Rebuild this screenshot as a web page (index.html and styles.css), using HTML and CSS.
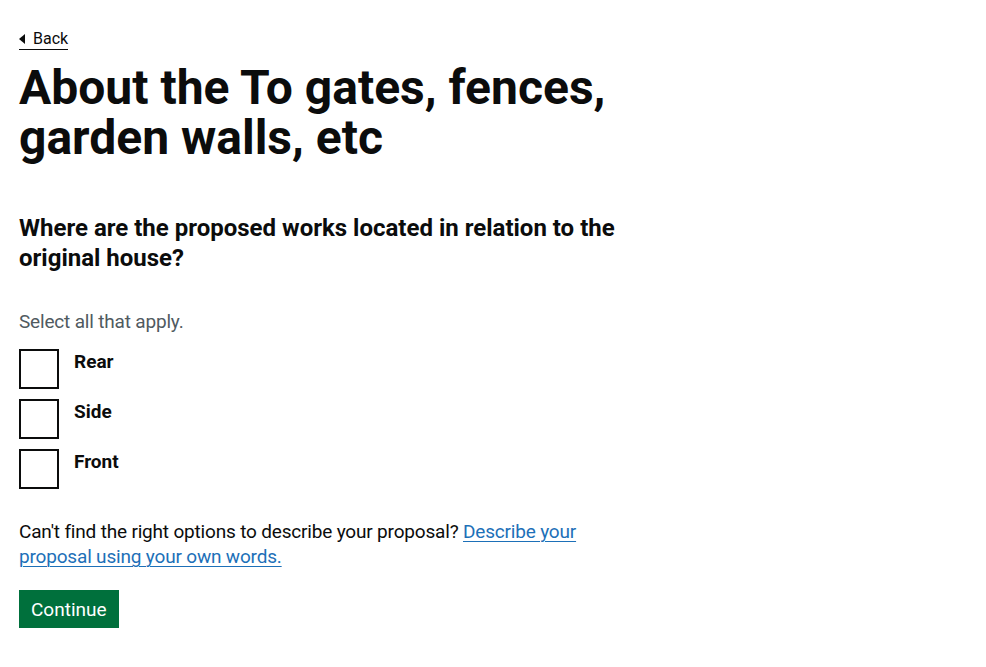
FILE: index.html
```html
<!DOCTYPE html>
<html lang="en">
<head>
<meta charset="utf-8">
<title>About the To gates, fences, garden walls, etc</title>
<link rel="stylesheet" href="styles.css">
</head>
<body>
<div class="page">
  <a href="#" class="back-link"><span class="back-arrow"></span><span>Back</span></a>
  <main class="main">
    <h1 class="heading-xl">About the To gates, fences, garden walls, etc</h1>
    <form class="form">
      <fieldset class="fieldset">
        <legend class="legend">
          <h2 class="heading-m">Where are the proposed works located in relation to the original house?</h2>
        </legend>
        <div class="hint">Select all that apply.</div>
        <div class="checkboxes">
          <label class="checkbox"><input type="checkbox" class="checkbox-input"><span class="checkbox-box"></span><span class="checkbox-label">Rear</span></label>
          <label class="checkbox"><input type="checkbox" class="checkbox-input"><span class="checkbox-box"></span><span class="checkbox-label">Side</span></label>
          <label class="checkbox"><input type="checkbox" class="checkbox-input"><span class="checkbox-box"></span><span class="checkbox-label">Front</span></label>
        </div>
      </fieldset>
      <p class="body">Can't find the right options to describe your proposal? <a href="#" class="link">Describe your proposal using your own words.</a></p>
      <button type="button" class="button">Continue</button>
    </form>
  </main>
</div>
</body>
</html>
```
FILE: styles.css
```css
* { box-sizing: border-box; }
html, body { margin: 0; padding: 0; background: #ffffff; }
body {
  font-family: Roboto, "Liberation Sans", Arial, sans-serif;
  color: #0b0c0c;
}
.page {
  padding: 29px 19px 0 19px;
}
.back-link {
  display: inline-flex;
  align-items: center;
  gap: 8px;
  font-size: 16px;
  line-height: 20px;
  color: #0b0c0c;
  text-decoration: none;
  border-bottom: 1px solid #0b0c0c;
}
.back-arrow {
  display: block;
  width: 0;
  height: 0;
  border-top: 5px solid transparent;
  border-bottom: 5px solid transparent;
  border-right: 6px solid #0b0c0c;
}
.main {
  width: 620px;
  padding-top: 13px;
}
.heading-xl {
  margin: 0 0 50px 0;
  font-size: 48px;
  line-height: 50px;
  font-weight: 700;
}
.fieldset {
  margin: 0;
  padding: 0;
  border: 0;
  min-width: 0;
}
.legend {
  padding: 0;
  margin: 0;
}
.heading-m {
  margin: 0 0 36px 0;
  font-size: 24px;
  line-height: 30px;
  font-weight: 700;
}
.hint {
  font-size: 19px;
  line-height: 25px;
  color: #505a5f;
  letter-spacing: -0.18px;
  margin-bottom: 15px;
}
.checkboxes {
  display: flex;
  flex-direction: column;
  gap: 10px;
}
.checkbox {
  display: flex;
  align-items: flex-start;
  min-height: 40px;
  cursor: pointer;
}
.checkbox-input {
  position: absolute;
  opacity: 0;
  width: 0;
  height: 0;
  margin: 0;
}
.checkbox-box {
  display: block;
  flex: 0 0 40px;
  width: 40px;
  height: 40px;
  border: 2px solid #0b0c0c;
  background: #ffffff;
}
.checkbox-label {
  padding: 0 15px;
  font-size: 19px;
  line-height: 25px;
  font-weight: 700;
}
.body {
  margin: 30px 0 21px 0;
  font-size: 19px;
  line-height: 25px;
  letter-spacing: -0.18px;
}
.link {
  color: #1d70b8;
  text-decoration: underline;
  text-decoration-thickness: 1px;
  text-underline-offset: 0.1578em;
}
.button {
  display: inline-block;
  margin: 0;
  padding: 8px 10px 7px;
  border: 2px solid transparent;
  border-radius: 0;
  background: #00703c;
  color: #ffffff;
  font-family: Roboto, "Liberation Sans", Arial, sans-serif;
  font-size: 19px;
  line-height: 19px;
  box-shadow: 0 2px 0 #002d18;
  cursor: pointer;
}
```
